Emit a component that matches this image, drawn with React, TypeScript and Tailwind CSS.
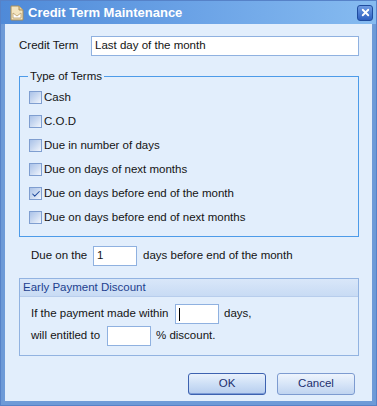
import { Check, X } from "lucide-react";

const font = { fontFamily: '"Liberation Sans", Arial, sans-serif' };

function Box({ checked = false }: { checked?: boolean }) {
  return (
    <span className="flex h-[13px] w-[13px] shrink-0 items-center justify-center border border-[#7f9ed0] bg-gradient-to-br from-[#aac2e8] via-[#cbdaf1] to-[#f2f6fd]">
      {checked ? <Check className="h-[10px] w-[10px] text-[#1f4a9c]" strokeWidth={2.5} /> : null}
    </span>
  );
}

const terms = [
  { label: "Cash", checked: false },
  { label: "C.O.D", checked: false },
  { label: "Due in number of days", checked: false },
  { label: "Due on days of next months", checked: false },
  { label: "Due on days before end of the month", checked: true },
  { label: "Due on days before end of next months", checked: false },
];

function Field({ w, children }: { w: string; children?: React.ReactNode }) {
  return (
    <div className={`flex h-[20px] ${w} items-center border border-[#8fb1e0] bg-white px-[3px]`}>
      {children}
    </div>
  );
}

function TitleIcon() {
  return (
    <svg width="14" height="16" viewBox="0 0 14 16">
      <path d="M1 1h8l4 4v10H1z" fill="#f3e4bf" stroke="#a88e5a" />
      <path d="M9 1v4h4" fill="#e5cf9c" stroke="#a88e5a" />
      <path d="M3 8l4 3 4-3v5H3z" fill="#fff" stroke="#b59b66" strokeWidth="0.8" />
    </svg>
  );
}

export default function App() {
  return (
    <div
      style={font}
      className="flex h-[406px] w-[377px] flex-col border border-[#5682c8] bg-[#6d9ad7] text-[11.5px] text-[#141414]"
    >
      <div className="flex h-[23px] shrink-0 items-center bg-gradient-to-r from-[#4f8ad8] via-[#6aa2e6] to-[#86bbf0] pl-[9px] pr-[3px]">
        <TitleIcon />
        <span className="ml-[4px] text-[13px] font-bold text-white">Credit Term Maintenance</span>
        <div className="ml-auto flex h-[16px] w-[16px] items-center justify-center rounded-[3px] border border-[#1f4c9e] bg-gradient-to-b from-[#6e9be3] to-[#2e5fbf]">
          <X className="h-[11px] w-[11px] text-white" strokeWidth={4} />
        </div>
      </div>
      <div className="mx-[2px] mb-[2px] flex-1 border-[2px] border-t-0 border-[#6e9bd8] bg-[#e2eefc] pl-[14px] pr-[13px] pt-[12px]">
        <div className="flex items-center">
          <span className="w-[72px]">Credit Term</span>
          <div className="flex h-[20px] flex-1 items-center border border-[#8fb1e0] bg-white px-[3px]">
            Last day of the month
          </div>
        </div>

        <div className="relative mt-[20px] h-[161px] border border-[#4d9be9]">
          <span className="absolute -top-[8px] left-[8px] bg-[#e2eefc] px-[2px] leading-[15px]">Type of Terms</span>
          <div className="flex flex-col gap-[11px] pl-[9px] pt-[14px]">
            {terms.map((t) => (
              <div key={t.label} className="flex h-[13px] items-center gap-[2px]">
                <Box checked={t.checked} />
                <span className="leading-[13px]">{t.label}</span>
              </div>
            ))}
          </div>
        </div>

        <div className="mt-[9px] flex items-center pl-[12px]">
          <span className="w-[62px]">Due on the</span>
          <Field w="w-[44px]">1</Field>
          <span className="ml-[6px]">days before end of the month</span>
        </div>

        <div className="mt-[12px] h-[78px] border border-[#92b3e1]">
          <div className="flex h-[18px] items-center border-b border-[#b7cdec] bg-gradient-to-b from-[#d9e7f9] to-[#c8dbf4] pl-[3px] text-[#1d3f8f]">
            Early Payment Discount
          </div>
          <div className="flex items-center pl-[11px] pt-[7px]">
            <span className="w-[144px]">If the payment made within</span>
            <Field w="w-[44px]">
              <span className="h-[13px] w-px bg-black" />
            </Field>
            <span className="ml-[5px]">days,</span>
          </div>
          <div className="mt-[2px] flex items-center pl-[11px]">
            <span className="w-[76px]">will entitled to</span>
            <Field w="w-[44px]" />
            <span className="ml-[5px]">% discount.</span>
          </div>
        </div>

        <div className="mt-[17px] flex justify-end gap-[11px] pr-[4px]">
          <button className="h-[22px] w-[78px] rounded-[3px] border border-[#3d62b0] bg-gradient-to-b from-[#e9f1fc] via-[#cddff6] to-[#b6cdee] text-[#1d2f6e] shadow-[inset_0_-1px_0_#7b9bd6]">
            OK
          </button>
          <button className="h-[22px] w-[78px] rounded-[3px] border border-[#7d9bd0] bg-gradient-to-b from-[#eef4fd] via-[#d7e5f8] to-[#c0d4f0] text-[#1d2f6e]">
            Cancel
          </button>
        </div>
      </div>
    </div>
  );
}
